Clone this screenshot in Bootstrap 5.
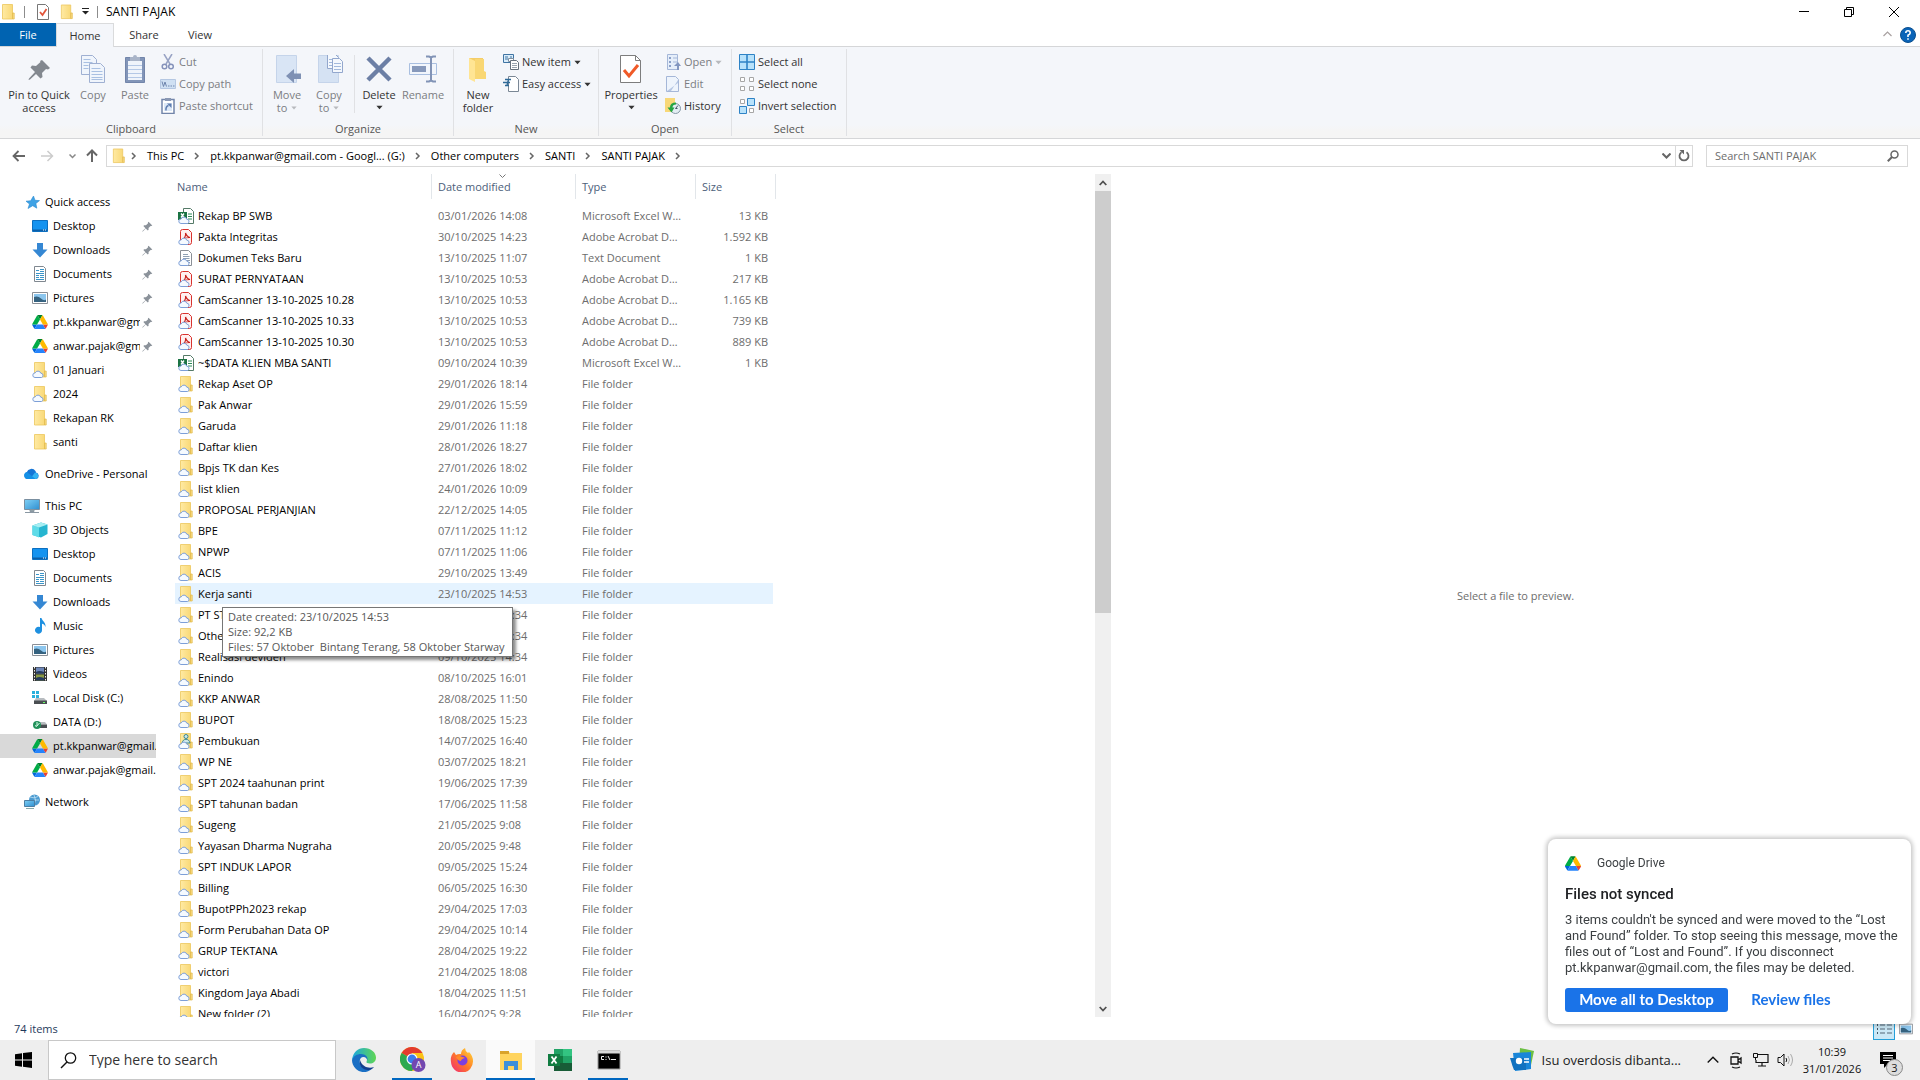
<!DOCTYPE html>
<html lang="en">
<head>
<meta charset="utf-8">
<meta name="viewport" content="width=device-width, initial-scale=1">
<title>SANTI PAJAK</title>
<link href="https://cdn.jsdelivr.net/npm/bootstrap@5.3.0/dist/css/bootstrap.min.css" rel="stylesheet">
<style>
body{font-family:"Open Sans","Noto Sans",sans-serif;font-size:11px;line-height:16px;color:#000;background:#fff;height:100vh;overflow:hidden}
svg{flex:none;display:block}
button{background:none;border:0;padding:0;color:inherit;font:inherit;text-decoration:none}
.titlebar{height:23px;font-size:12px}
.vline{width:1px;height:12px;background:#8c8c8c}
.capbtn{width:45px;height:23px}
.tabs{height:23px;color:#333}
.tabs a{width:60px;height:23px;line-height:23px;text-align:center;color:#333;text-decoration:none}
.tabs a.filetab{width:56px;background:#0063b1;color:#fff}
.tabs a.on{width:58px;border:1px solid #dadbdc;border-bottom:0;position:relative;height:24px;z-index:1;background:#f4f6fa}
.tabs a.viewtab{width:52px}
.ribbon{height:93px;background:linear-gradient(#f4f6fa 78px,#f5f5f5 84px);border-top:1px solid #d5d6d8;border-bottom:1px solid #d5d6d8;color:#333}
.grp{border-right:1px solid #e0e1e4;margin:2px 0;height:87px}
.grp-body{height:72px;padding-top:2px;padding-left:3px}
.g1 .grp-body{padding-left:6px}
.g4 .grp-body{padding-left:2px}
.grp-name{height:15px;line-height:15px;text-align:center;color:#555}
.g1{width:263px}.g2{width:191px}.g3{width:145px}.g4{width:133px}.g5{width:115px}
.big{width:42px;padding-top:4px;line-height:13px;display:flex;flex-direction:column;align-items:center;white-space:nowrap}
.big svg{margin-bottom:5px}
.wide{width:66px}.mid{width:60px}.wider{width:46px}
.off{color:#7b7d82}
.minor{display:flex;align-items:center;gap:3px;height:22px;padding-left:4px;white-space:nowrap}
.insep{width:1px;height:58px;background:#e0e1e4;margin:4px 3px 0 4px}
.addr{height:28px;padding:6px 12px 0 12px}
.box{border:1px solid #d9d9d9;height:22px}
.box a{color:#000;text-decoration:none;white-space:nowrap}
.crumbs{gap:10px;padding-left:5px}
.refresh{border-left:1px solid #d9d9d9;padding:0 2px;height:20px}
.navarrows{width:94px}
.searchbox{width:202px;margin-left:13px}
.searchbox input{border:0;outline:0;font-size:11px;width:160px;padding:0;color:#6d6d6d}
.searchbox input::placeholder{color:#6d6d6d;opacity:1}
.side{width:156px;padding-top:23px;overflow:hidden}
.side a{display:flex;align-items:center;height:24px;color:#000;text-decoration:none;white-space:nowrap;gap:5px;padding-left:32px;overflow:hidden}
.side a.root{padding-left:24px}
.side a.sel{background:#d9d9d9}
.side a span{flex:1 1 0;min-width:0;overflow:hidden}
.side .pinned span{flex:0 0 87px}
.side .pinned svg:last-child{margin-left:-3px}
.side .gapup{margin-top:8px}
.pane{margin-left:19px;padding-top:7px;overflow:hidden;position:relative}
.files{border-collapse:separate;border-spacing:0;table-layout:fixed;width:601px}
.c-name{width:257px}.c-date{width:144px}.c-type{width:120px}.c-size{width:80px}
.files th{height:25px;padding:0 0 0 6px;font-weight:400;color:#4c607a;border-right:1px solid #e2e6ea;position:relative}
.files th:first-child{padding-left:2px}
.files td{height:21px;line-height:21px;padding:0 0 0 6px;color:#6d6d6d;white-space:nowrap;overflow:hidden;text-overflow:ellipsis}
.files td:first-child{color:#000;padding-left:3px}
.files td:last-child{text-align:right;padding-right:5px;border-right:3px solid transparent;background-clip:padding-box}
.files td:nth-child(3){padding-right:12px}
.files tr.hov td{background-color:#e5f3ff}
.files .spacer td{height:6px;line-height:6px}
.sortmark{position:absolute;left:67px;top:0}
.tip{position:absolute;left:47px;top:440px;border:1px solid #767676;background:#fff;color:#575757;line-height:15px;padding:1px 7px 2px 5px;box-shadow:3px 3px 3px rgba(0,0,0,.45);white-space:pre}
.sbar{width:16px;margin-top:7px;background:#f0f0f0}
.sbar button{height:17px;width:16px;display:flex;align-items:center;justify-content:center}
.thumb{background:#cdcdcd;flex:422 0 0}
.track{flex:388 0 0}
.preview{color:#6d6d6d;flex:0 0 809px;padding-top:7px}
@media (max-width:1800px){.preview{flex-basis:42%}}
.status{height:23px;padding:0 7px 0 14px;color:#1e395b}
.viewbtn{width:22px;height:22px;border:1px solid #26a0da;background:#cbe8f6}
.task{height:40px;background:#eee;color:#1a1a1a}
.tasksearch{width:288px;height:40px;background:#fff;border:1px solid #c8c8c8;padding-left:11px;margin-right:3px}
.tasksearch input{border:0;outline:0;background:none;font-size:14px;padding:0;width:220px;color:#333}
.tasksearch input::placeholder{color:#333;opacity:1}
.app{width:49px;height:40px;display:flex;align-items:center;justify-content:center;position:relative}
.app.start{width:48px;padding-right:9px}
.app.start svg{margin-left:8px}
.app.run::after{content:"";position:absolute;left:4px;right:5px;bottom:0;height:2px;background:#0067c0}
.app.act{background:#fafafa}
.app.act::after{left:0;right:0}
.news{font-size:13px;color:#222;margin-right:26px}
.traygap{margin-left:11px}
.clock{width:76px;text-align:center;line-height:17px;color:#111}
.actioncenter{width:40px;position:relative;margin-left:10px}
.count{position:absolute;left:6px;top:7px;width:17px;height:17px;border-radius:50%;background:#ddd;border:1px solid #888;font-size:11px;line-height:15px;text-align:center}
.toastbox{position:fixed;right:9px;bottom:56px;width:363px;background:#fff;border-radius:8px;box-shadow:0 0 4px 2px rgba(0,0,0,.22);padding:16px 8px 12px 17px;font-family:Roboto,sans-serif;color:#3c4043;font-size:12px;z-index:5}
.toastbox h2{font:500 15px/20px Roboto,sans-serif;color:#202124;margin:13px 0 8px}
.toastbox p{font-size:13px;line-height:16px;margin:0 0 12px}
.gbtn{font:700 15px/22px Lato,sans-serif;height:24px;padding-bottom:2px;color:#fff;background:#1a73e8;border-radius:3px;width:163px}
.gbtn.text{background:none;color:#1a73e8;width:126px}
</style>
<script src="https://cdn.jsdelivr.net/npm/bootstrap@5.3.0/dist/js/bootstrap.bundle.min.js"></script>
</head>
<body class="d-flex flex-column">

<svg width="0" height="0" class="position-absolute" aria-hidden="true">
<defs>
<linearGradient id="gy" x1="0" x2="1"><stop offset="0" stop-color="#ffeaa3"/><stop offset="1" stop-color="#f9d978"/></linearGradient>
<linearGradient id="gb" x1="0" y1="0" x2="1" y2="1"><stop offset="0" stop-color="#7fd0f5"/><stop offset="1" stop-color="#2f8fd0"/></linearGradient>
<linearGradient id="ge" x1="0" y1="0" x2="1" y2="0"><stop offset="0" stop-color="#1ba7e0"/><stop offset="1" stop-color="#5fd653"/></linearGradient>
<linearGradient id="gf" x1="1" y1="0" x2="0" y2="1"><stop offset="0" stop-color="#ffe03a"/><stop offset=".5" stop-color="#ff7a26"/><stop offset="1" stop-color="#f0237b"/></linearGradient>
<symbol id="folder" viewBox="0 0 16 16"><path d="M2.500.5h10V15h-10z" fill="url(#gy)" stroke="#ecc65c" stroke-width=".8"/><path d="M12.500 9h1.700v6h-1.700z" fill="#fbdc82" stroke="#e0b748" stroke-width=".7"/></symbol>
<symbol id="cloud" viewBox="0 0 16 16"><path d="M3 15.500a2.300 2.300 0 0 1 .2-4.600 3 3 0 0 1 5.600.3 2.200 2.200 0 0 1 .7 4.300z" fill="#f5faff" stroke="#7d9fd8" stroke-width="1"/></symbol>
<symbol id="cfolder" viewBox="0 0 16 16"><use href="#folder"/><use href="#cloud"/></symbol>
<symbol id="pfolder" viewBox="0 0 16 16"><use href="#folder"/><circle cx="8" cy="3.500" r="2" fill="#cfe8ea" stroke="#3a8793"/><path d="M4 10c1-5 7-5 8 0z" fill="#cfe8ea" stroke="#3a8793"/><use href="#cloud"/></symbol>
<symbol id="pdf" viewBox="0 0 16 16"><path d="M2.500 2.500q0-2 2-2h6l3 3v10q0 2-2 2h-7q-2 0-2-2z" fill="#fff0f0" stroke="#d9322e"/><path d="M5 10c2-1 3-4 2.500-6 1 3 2 4 4.500 4.500-3 0-5 .5-7 1.500" fill="none" stroke="#c8201c" stroke-width="1.200"/><use href="#cloud"/></symbol>
<symbol id="txt" viewBox="0 0 16 16"><path d="M2.500.5h8l3 3v12h-11z" fill="#fff" stroke="#8a8f96"/><path d="M5 4.500h5M5 6.500h6.500M5 8.500h6.500M9 10.500h3M10 12.500h2" stroke="#8fa0b3"/><use href="#cloud"/></symbol>
<symbol id="xls" viewBox="0 0 16 16"><path d="M5.500.5h7l3 3v12h-10z" fill="#fff" stroke="#557a68"/><path d="M10 6h4M10 8.500h4M10 11h4" stroke="#2b8a57"/><path d="M0 4h9v8H0z" fill="#1b7343"/><path d="M3 5.500l3 4M6 5.500l-3 4" stroke="#fff" stroke-width="1.300"/><use href="#cloud"/></symbol>
<symbol id="drive" viewBox="0 0 87.300 78"><path d="m6.600 66.850 3.850 6.650c.8 1.400 1.950 2.500 3.300 3.300l13.750-23.800h-27.500c0 1.550.4 3.100 1.200 4.500z" fill="#0066da"/><path d="m43.650 25-13.750-23.800c-1.350.8-2.500 1.900-3.300 3.300l-25.400 44a9 9 0 0 0-1.200 4.500h27.500z" fill="#00ac47"/><path d="m73.550 76.800c1.350-.8 2.500-1.900 3.300-3.300l1.600-2.750 7.650-13.250c.8-1.400 1.200-2.950 1.200-4.500h-27.500l5.850 11.500z" fill="#ea4335"/><path d="m43.650 25 13.750-23.800c-1.350-.8-2.900-1.200-4.500-1.200h-18.500c-1.600 0-3.150.45-4.500 1.200z" fill="#00832d"/><path d="m59.800 53h-32.300l-13.750 23.800c1.350.8 2.900 1.200 4.500 1.200h50.800c1.600 0 3.150-.45 4.500-1.200z" fill="#2684fc"/><path d="m73.400 26.500-12.700-22c-.8-1.400-1.950-2.500-3.300-3.300l-13.750 23.800 16.150 28h27.450c0-1.550-.4-3.100-1.200-4.500z" fill="#ffba00"/></symbol>
<symbol id="desk" viewBox="0 0 16 16"><path d="M.5 2.500h15v11H.5z" fill="#1493f0" stroke="#0c6fc0"/><path d="M1 11.500h14v1.500H1z" fill="#0b5ea8"/><path d="M11 12h3" stroke="#fff" stroke-dasharray="1 1"/></symbol>
<symbol id="down" viewBox="0 0 16 16"><path d="M5 1h6v6.500h4.500L8 15.500.5 7.500H5z" fill="#3587d3"/></symbol>
<symbol id="doc" viewBox="0 0 16 16"><path d="M2.500.5h9l2 2v13h-11z" fill="#fff" stroke="#808890"/><path d="M4 4.500h3M8 3.500h4M8 5.500h4M4 7.500h8M4 9.500h3M8 9.500h4M4 11.500h3M8 11.500h4M4 13.500h8" stroke="#3a95c9"/></symbol>
<symbol id="pic" viewBox="0 0 16 16"><path d="M.5 2.500h15v11H.5z" fill="#fff" stroke="#8a8f96"/><path d="M2 4h12v8H2z" fill="#8cc6ee"/><path d="M2 7q4-1.500 7 1.500t5 1V12H2z" fill="#35627f"/></symbol>
<symbol id="star" viewBox="0 0 16 16"><path d="M9.500 2l1.500 4.300 4.500.3-3.600 2.900.9 4.700-4.100-2.500L4 14.500l1.500-4.500L2 7.200l4.700-.5z" fill="#3ea2e5" stroke="#2a8ad0" stroke-width=".6"/></symbol>
<symbol id="onedrive" viewBox="0 0 16 16"><path d="M3.500 13a3.500 3.500 0 0 1-.8-6.800A5 5 0 0 1 11.500 5q.4.700.5 1.500A3.400 3.400 0 0 1 12.500 13z" fill="#1675d6"/><path d="M6 13l5-6.400a3.400 3.400 0 0 1 1.500 6.400z" fill="#35b3f3"/><path d="M3 6l8.500 6.900H3.500A3.500 3.500 0 0 1 3 6z" fill="#1490e6"/></symbol>
<symbol id="pc" viewBox="0 0 16 16"><path d="M.5 1.500h15v10H.5z" fill="url(#gb)" stroke="#7a8fa0"/><path d="M6 12h4v1.500H6zM1 14.500h14" stroke="#8a98a3" fill="#9aa"/></symbol>
<symbol id="cube" viewBox="0 0 16 16"><path d="M.5 3.500L9 .5l6.500 2v9.500L9 15.500.5 13z" fill="#25b5d0"/><path d="M.5 3.500L7 5.500v9.900l-6.500-2.500z" fill="#5edbe8"/><path d="M.5 3.500L9 .5l6.500 2L7 5.500z" fill="#a6eef2"/></symbol>
<symbol id="music" viewBox="0 0 16 16"><path d="M8 0h1.500c.5 3 4.500 4 4 9-.6-2-2-3-3.500-3.200V12a3.500 3.500 0 1 1-2-3z" fill="#1e90e0"/></symbol>
<symbol id="video" viewBox="0 0 16 16"><path d="M1 1h14v14H1z" fill="#333"/><path d="M4 1.500h8v6H4z" fill="#6d86b8"/><path d="M4 8.500h8v6H4z" fill="#8a9a45"/><path d="M4 6q3-2 8 0v1.500H4zM4 12q3-2 8 0v2.500H4z" fill="#263b5e"/><path d="M2.500 1v14M13.500 1v14" stroke="#eee" stroke-dasharray="1.500 1.500"/></symbol>
<symbol id="disk" viewBox="0 0 16 16"><path d="M0 1h3v3H0zM4 1h3v3H4zM0 5h3v3H0zM4 5h3v3H4z" fill="#2bb0dc"/><path d="M4 8h8l3 3H2z" fill="#b8bcc0"/><path d="M2 10.500h13V14H2z" fill="#4a4e52"/><path d="M11 12.500h2" stroke="#6f6"/></symbol>
<symbol id="ddisk" viewBox="0 0 16 16"><path d="M7 8h6l2 2.500H5z" fill="#b8bcc0"/><path d="M5 10.500h10V14H5z" fill="#4a4e52"/><circle cx="5" cy="11" r="4" fill="#22915a"/><path d="M3 11.500l1.500 1L7.500 9M5 8v4" stroke="#d8ffe8" fill="none"/></symbol>
<symbol id="net" viewBox="0 0 16 16"><circle cx="10.500" cy="6" r="5.500" fill="#4a9ad0"/><path d="M6 3q4 2 8-.5M6 8q5-3 9-2M10 1q3 5 0 10" stroke="#bfe1f5" fill="none" stroke-width=".8"/><path d="M.5 6.500h10v6H.5z" fill="url(#gb)" stroke="#4d7fa3"/><path d="M2 14.500h8" stroke="#8aa"/></symbol>
<symbol id="pin" viewBox="0 0 16 16"><path d="M9.500 1l5.500 5.500-1.500.8-1-.2-3 3 .1 2.500-1.200 1.200-3-3-4.200 4.300-.8.300.3-.8L5 10.400l-3-3 1.200-1.200 2.600.1 3-3-.2-1z" fill="#8b929a"/></symbol>
<symbol id="dn" viewBox="0 0 8 5"><path d="M.5.500h7L4 4.500z" fill="currentColor"/></symbol>
<symbol id="chev" viewBox="0 0 6 8"><path d="M1 1l3 3-3 3" fill="none" stroke="#666" stroke-width="1.500"/></symbol>
</defs>
</svg>

<header>
<div class="titlebar d-flex align-items-center">
  <svg width="16" height="16" class="me-2"><use href="#folder"/></svg>
  <span class="vline me-2"></span>
  <button class="mx-1 pe-1" aria-label="Properties"><svg width="14" height="16" viewBox="0 0 14 16"><path d="M.5.5h8l3 3v12H.5z" fill="#fff" stroke="#777"/><path d="M3 8l2.500 3L9.500 5" fill="none" stroke="#e2553a" stroke-width="1.800"/></svg></button>
  <button class="me-2" aria-label="New folder"><svg width="15" height="16"><use href="#folder"/></svg></button>
  <button class="me-2" aria-label="Customize"><svg width="7" height="7" viewBox="0 0 7 7"><path d="M0 .5h7" stroke="#222"/><path d="M0 3h7L3.500 6.500z" fill="#222"/></svg></button>
  <span class="vline me-2"></span>
  <span class="me-auto">SANTI PAJAK</span>
  <button class="capbtn" aria-label="Minimize"><svg class="mx-auto" width="10" height="10" viewBox="0 0 10 10"><path d="M0 4.500h10" stroke="#000"/></svg></button>
  <button class="capbtn" aria-label="Restore"><svg class="mx-auto" width="10" height="10" viewBox="0 0 10 10"><path d="M.5 2.500h7v7h-7zM2.500 2.500v-2h7v7h-2" fill="none" stroke="#000"/></svg></button>
  <button class="capbtn me-1" aria-label="Close"><svg class="mx-auto" width="10" height="10" viewBox="0 0 10 10"><path d="M0 0l10 10M10 0L0 10" stroke="#000"/></svg></button>
</div>
<nav class="tabs d-flex align-items-start">
  <a class="filetab" href="#">File</a><a class="on" href="#">Home</a><a href="#">Share</a><a href="#" class="viewtab me-auto">View</a>
  <button class="mt-2 me-1" aria-label="Collapse"><svg width="9" height="6" viewBox="0 0 9 6"><path d="M.5 5l4-4 4 4" fill="none" stroke="#a8a0a0" stroke-width="1.200"/></svg></button>
  <button class="ms-1 me-1 mt-1" aria-label="Help"><svg width="16" height="16" viewBox="0 0 16 16"><circle cx="8" cy="8" r="7.500" fill="#0a64b8" stroke="#0b4f8f"/><path d="M5.800 6q0-2.200 2.200-2.200T10.200 6Q10.200 7 8 8.200V10" fill="none" stroke="#fff" stroke-width="1.600"/><path d="M7.200 11.200h1.600v1.600H7.200z" fill="#fff"/></svg></button>
</nav>
<div class="ribbon d-flex">
  <section class="grp g1">
    <div class="grp-body d-flex">
      <button class="big wide"><svg width="28" height="28" viewBox="0 0 28 28"><path d="M17 5l8 8-2 1.500-2-.5-4 4 .5 4-2 1.500-4.500-4.500-6 5.500-1.500.5.5-1.500L10 17l-4.500-4.500L7 10.500l4 .5 4.500-4-.5-1z" fill="#83888f"/></svg>Pin to Quick<span>access</span></button>
      <button class="big off"><svg width="28" height="28" viewBox="0 0 28 28"><g fill="#f0f5fc" stroke="#9fb0d2"><path d="M2.500.5h11l4 4v15h-15z"/><path d="M10.500 8.500h11l4 4v15h-15z"/></g><path d="M4.500 4.500h7M4.500 7.500h9M4.500 10.500h5M4.500 13.500h5M12.500 13.500h9M12.500 16.500h11M12.500 19.500h11M12.500 22.500h11M12.500 24.500h11" stroke="#a9c0e2"/></svg>Copy</button>
      <button class="big off"><svg width="28" height="28" viewBox="0 0 28 28"><path d="M4.500 2.500h19v25h-19z" fill="#8295b8" stroke="#7285aa"/><path d="M7 6h14v19H7z" fill="#eff4fb"/><path d="M9 2h3q0-2 2-2t2 2h3v4H9z" fill="#a9b4c8"/><path d="M7 10.500h14M7 14.500h14M7 18.500h14M7 22.500h14" stroke="#b4c8e6"/></svg>Paste</button>
      <div class="off">
        <button class="minor"><svg width="16" height="16" viewBox="0 0 16 16"><path d="M4 0l6 10M12 0L6 10" stroke="#98a3c4" stroke-width="1.500"/><circle cx="4.500" cy="12.500" r="2.300" fill="none" stroke="#8592ba" stroke-width="1.500"/><circle cx="11" cy="12.500" r="2.300" fill="none" stroke="#8592ba" stroke-width="1.500"/></svg>Cut</button>
        <button class="minor"><svg width="16" height="16" viewBox="0 0 16 16"><path d="M.5 3.500h15v9H.5z" fill="#cfe0f3" stroke="#b4c7e2"/><path d="M2 5.500l1.500 5L5 6l1.500 4.500M8 10h1.500M10.500 10H12M13 10h1.500" fill="none" stroke="#6f86ae"/></svg>Copy path</button>
        <button class="minor"><svg width="16" height="16" viewBox="0 0 16 16"><path d="M2 1.500h12v14H2z" fill="#fff" stroke="#7285aa" stroke-width="1.500"/><path d="M5 0h6v3H5z" fill="#8a98b4"/><path d="M4 5h8v8H4z" fill="#dce8f7"/><path d="M6 12.500q-.5-4 2.500-5" fill="none" stroke="#5f7db0" stroke-width="1.500"/><path d="M7 5.500h4.500V10z" fill="#5f7db0"/></svg>Paste shortcut</button>
      </div>
    </div>
    <div class="grp-name">Clipboard</div>
  </section>
  <section class="grp g2">
    <div class="grp-body d-flex">
      <button class="big off"><svg width="28" height="28" viewBox="0 0 28 28"><path d="M3.500.5h20v27h-20z" fill="#d9e5f5" stroke="#c5d4ea"/><path d="M13 21l8-7v4.500h8v5.500h-8v4z" fill="#7f91b4"/></svg>Move<span class="d-flex align-items-center gap-1">to <svg class="m-0 opacity-50" width="6" height="4"><use href="#dn"/></svg></span></button>
      <button class="big off"><svg width="28" height="28" viewBox="0 0 28 28"><path d="M3.500.5h20v27h-20z" fill="#d5e2f3" stroke="#c5d4ea"/><g fill="#f4f8fd" stroke="#93a7cd"><path d="M12.500-.5h8l3 3v11h-11z"/><path d="M17.500 3.500h7l3 3v11h-10z"/></g><path d="M19 8.500h7M19 11.500h7M19 14.500h7M14 4.500h3M14 7.500h3M14 10.500h3" stroke="#a3b9dc"/></svg>Copy<span class="d-flex align-items-center gap-1">to <svg class="m-0 opacity-50" width="6" height="4"><use href="#dn"/></svg></span></button>
      <span class="insep"></span>
      <button class="big"><svg width="28" height="28" viewBox="0 0 28 28"><path d="M3 3l22 22M25 3L3 25" stroke="#6c7fa5" stroke-width="4.500"/></svg>Delete<svg class="mt-1" width="7" height="5"><use href="#dn"/></svg></button>
      <button class="big wider off"><svg width="28" height="28" viewBox="0 0 28 28"><path d="M.5 8.500h27v11H.5z" fill="#f2f6fc" stroke="#a9bfe0"/><path d="M3 11h14v6H3z" fill="#8799bb"/><path d="M17 1.500h3l2 1 2-1h3M17 26.500h3l2-1 2 1h3M22 2v24" fill="none" stroke="#8193b6" stroke-width="2"/></svg>Rename</button>
    </div>
    <div class="grp-name">Organize</div>
  </section>
  <section class="grp g3">
    <div class="grp-body d-flex">
      <button class="big"><svg width="28" height="28" viewBox="0 0 28 28"><path d="M5 3h14v21H5z" fill="#f4cd68"/><path d="M5 3l6 3v21l-6-3z" fill="#ffe594"/><path d="M11 4h9v12l2 1v7h-11z" fill="#f9d774"/></svg>New<span>folder</span></button>
      <div>
        <button class="minor"><svg width="16" height="16" viewBox="0 0 16 16"><path d="M.5.500h10v8H.5z" fill="#d9ecfa" stroke="#3f74a3"/><path d="M2 3h3M7 3h2M2 5h3" stroke="#3f74a3"/><path d="M5.500 4.500h5v3h-5z" fill="#fff" stroke="#8090a0"/><path d="M7.500 6.500h6l2 2v7h-8z" fill="#fff" stroke="#66717d"/><path d="M9 9.500h5M9 11.500h5M9 13.500h5" stroke="#9aa5b0"/></svg>New item <svg width="7" height="5"><use href="#dn"/></svg></button>
        <button class="minor"><svg width="16" height="16" viewBox="0 0 16 16"><path d="M5.500.5h7l3 3v12h-10z" fill="#fff" stroke="#7a8795"/><path d="M2 3.500h6M0 6.500h7M2 9.500h4M6 3q-2 3-2 7" stroke="#2f6a97" fill="none" stroke-width="1.300"/></svg>Easy access <svg width="7" height="5"><use href="#dn"/></svg></button>
      </div>
    </div>
    <div class="grp-name">New</div>
  </section>
  <section class="grp g4">
    <div class="grp-body d-flex">
      <button class="big mid"><svg width="28" height="28" viewBox="0 0 28 28"><path d="M3.500.5h15l5 5v22h-20z" fill="#fff" stroke="#7d7d7d"/><path d="M18.500.5v5h5" fill="none" stroke="#7d7d7d"/><path d="M7 15l5 6 9-11" fill="none" stroke="#f05a28" stroke-width="3"/></svg>Properties<svg class="mt-1" width="7" height="5"><use href="#dn"/></svg></button>
      <div>
        <button class="minor off"><svg width="16" height="16" viewBox="0 0 16 16"><path d="M2.500.5h10v15h-10z" fill="#e5eefa" stroke="#a5b7d8"/><path d="M4 3h2v2H4zM4 7h2v2H4zM4 11h2v2H4z" fill="#8ba0c8"/><path d="M8 4h4M8 8h4" stroke="#a5b7d8"/><path d="M12 16v-4h-3l4-4 3 4h-2v4z" fill="#8296c0"/></svg>Open <svg class="opacity-50" width="7" height="5"><use href="#dn"/></svg></button>
        <button class="minor off"><svg width="16" height="16" viewBox="0 0 16 16"><path d="M1.500.5h9l3 3v12h-12z" fill="#eef4fc" stroke="#a5b7d8"/><path d="M13 4L6 15H2l11-8z" fill="#b5c6e3"/></svg>Edit</button>
        <button class="minor"><svg width="16" height="16" viewBox="0 0 16 16"><path d="M0 0h10v14H0z" fill="#f8d878"/><circle cx="10.500" cy="10.500" r="5" fill="#e3edf3" stroke="#8497a5"/><path d="M10.500 10.500l2.500-3M10.500 10.500h2" stroke="#456"/><path d="M11 4.500q-6 0-6 5H2.500l4 5 3-5H7.500q0-3 3.500-3z" fill="#26a544"/></svg>History</button>
      </div>
    </div>
    <div class="grp-name">Open</div>
  </section>
  <section class="grp g5">
    <div class="grp-body">
      <button class="minor"><svg width="16" height="16" viewBox="0 0 16 16"><path d="M.5.500h15v15H.5z" fill="#b8e2fb" stroke="#2e83c6"/><path d="M8 0v16M0 8h16" stroke="#2e83c6" stroke-width="1.600"/></svg>Select all</button>
      <button class="minor"><svg width="16" height="16" viewBox="0 0 16 16"><path d="M1.500 1.500h4v4h-4zM10.500 1.500h4v4h-4zM1.500 10.500h4v4h-4zM10.500 10.500h4v4h-4z" fill="#fff" stroke="#a6a6a6"/></svg>Select none</button>
      <button class="minor"><svg width="16" height="16" viewBox="0 0 16 16"><path d="M1.500 1.500h4v4h-4zM10.500 10.500h4v4h-4z" fill="#fff" stroke="#a6a6a6"/><path d="M8.500.500h7v7h-7zM.5 8.500h7v7h-7z" fill="#b8e2fb" stroke="#2e83c6"/></svg>Invert selection</button>
    </div>
    <div class="grp-name">Select</div>
  </section>
</div>
<div class="addr d-flex">
  <div class="navarrows d-flex align-items-center justify-content-between pe-2">
    <button aria-label="Back"><svg width="14" height="12" viewBox="0 0 14 12"><path d="M13 6H2M6.500 1L1.500 6l5 5" fill="none" stroke="#666" stroke-width="1.800"/></svg></button>
    <button class="ps-1" aria-label="Forward"><svg width="14" height="12" viewBox="0 0 14 12"><path d="M1 6h11M7.500 1l5 5-5 5" fill="none" stroke="#ccc" stroke-width="1.500"/></svg></button>
    <button class="ps-1" aria-label="Recent"><svg width="7" height="5" viewBox="0 0 7 5"><path d="M.5.500l3 3 3-3" fill="none" stroke="#888" stroke-width="1.500"/></svg></button>
    <button aria-label="Up"><svg width="12" height="14" viewBox="0 0 12 14"><path d="M6 13V2M1 6.500L6 1.500l5 5" fill="none" stroke="#666" stroke-width="2"/></svg></button>
  </div>
  <div class="box d-flex align-items-center flex-grow-1 ps-1">
    <svg width="15" height="16"><use href="#folder"/></svg>
    <div class="crumbs d-flex align-items-center">
    <svg width="6" height="8"><use href="#chev"/></svg>
    <a href="#">This PC</a><svg width="6" height="8"><use href="#chev"/></svg>
    <a href="#">pt.kkpanwar@gmail.com - Googl... (G:)</a><svg width="6" height="8"><use href="#chev"/></svg>
    <a href="#">Other computers</a><svg width="6" height="8"><use href="#chev"/></svg>
    <a href="#">SANTI</a><svg width="6" height="8"><use href="#chev"/></svg>
    <a href="#">SANTI PAJAK</a><svg width="6" height="8"><use href="#chev"/></svg>
    </div>
    <button class="ms-auto me-1" aria-label="Previous locations"><svg width="9" height="6" viewBox="0 0 9 6"><path d="M.5.500l4 4 4-4" fill="none" stroke="#666" stroke-width="2"/></svg></button>
    <button class="refresh" aria-label="Refresh"><svg width="12" height="12" viewBox="0 0 12 12"><path d="M8.500 2.200a4.500 4.500 0 1 1-5 0" fill="none" stroke="#666" stroke-width="1.800"/><path d="M1.500 0h4.500v4.500z" fill="#666"/></svg></button>
  </div>
  <div class="box searchbox d-flex align-items-center justify-content-between px-2">
    <input type="search" aria-label="Search" placeholder="Search SANTI PAJAK">
    <svg width="12" height="12" viewBox="0 0 12 12"><circle cx="7.500" cy="4.500" r="3.500" fill="none" stroke="#666" stroke-width="1.500"/><path d="M5 7L.8 11.200" stroke="#666" stroke-width="2"/></svg>
  </div>
</div>
</header>

<main class="d-flex flex-grow-1 overflow-hidden">
<nav class="side flex-shrink-0">
  <a class="root" href="#"><svg width="16" height="16"><use href="#star"/></svg><span>Quick access</span></a>
  <a class="pinned" href="#"><svg width="16" height="16"><use href="#desk"/></svg><span>Desktop</span><svg width="11" height="11"><use href="#pin"/></svg></a>
  <a class="pinned" href="#"><svg width="16" height="16"><use href="#down"/></svg><span>Downloads</span><svg width="11" height="11"><use href="#pin"/></svg></a>
  <a class="pinned" href="#"><svg width="16" height="16"><use href="#doc"/></svg><span>Documents</span><svg width="11" height="11"><use href="#pin"/></svg></a>
  <a class="pinned" href="#"><svg width="16" height="16"><use href="#pic"/></svg><span>Pictures</span><svg width="11" height="11"><use href="#pin"/></svg></a>
  <a class="pinned" href="#"><svg width="16" height="14"><use href="#drive"/></svg><span>pt.kkpanwar@gmail.com</span><svg width="11" height="11"><use href="#pin"/></svg></a>
  <a class="pinned" href="#"><svg width="16" height="14"><use href="#drive"/></svg><span>anwar.pajak@gmail.com</span><svg width="11" height="11"><use href="#pin"/></svg></a>
  <a href="#"><svg width="16" height="16"><use href="#cfolder"/></svg><span>01 Januari</span></a>
  <a href="#"><svg width="16" height="16"><use href="#cfolder"/></svg><span>2024</span></a>
  <a href="#"><svg width="16" height="16"><use href="#folder"/></svg><span>Rekapan RK</span></a>
  <a href="#"><svg width="16" height="16"><use href="#folder"/></svg><span>santi</span></a>
  <a class="root gapup" href="#"><svg width="16" height="16"><use href="#onedrive"/></svg><span>OneDrive - Personal</span></a>
  <a class="root gapup" href="#"><svg width="16" height="16"><use href="#pc"/></svg><span>This PC</span></a>
  <a href="#"><svg width="16" height="16"><use href="#cube"/></svg><span>3D Objects</span></a>
  <a href="#"><svg width="16" height="16"><use href="#desk"/></svg><span>Desktop</span></a>
  <a href="#"><svg width="16" height="16"><use href="#doc"/></svg><span>Documents</span></a>
  <a href="#"><svg width="16" height="16"><use href="#down"/></svg><span>Downloads</span></a>
  <a href="#"><svg width="16" height="16"><use href="#music"/></svg><span>Music</span></a>
  <a href="#"><svg width="16" height="16"><use href="#pic"/></svg><span>Pictures</span></a>
  <a href="#"><svg width="16" height="16"><use href="#video"/></svg><span>Videos</span></a>
  <a href="#"><svg width="16" height="16"><use href="#disk"/></svg><span>Local Disk (C:)</span></a>
  <a href="#"><svg width="16" height="16"><use href="#ddisk"/></svg><span>DATA (D:)</span></a>
  <a class="sel" href="#"><svg width="16" height="14"><use href="#drive"/></svg><span>pt.kkpanwar@gmail.com</span></a>
  <a href="#"><svg width="16" height="14"><use href="#drive"/></svg><span>anwar.pajak@gmail.com</span></a>
  <a class="root gapup" href="#"><svg width="16" height="16"><use href="#net"/></svg><span>Network</span></a>
</nav>
<section class="pane flex-grow-1">
  <table class="files">
    <colgroup><col class="c-name"><col class="c-date"><col class="c-type"><col class="c-size"></colgroup>
    <thead><tr><th scope="col">Name</th><th scope="col"><svg class="sortmark" width="7" height="5" viewBox="0 0 7 5"><path d="M.5.500l3 3 3-3" fill="none" stroke="#777"/></svg>Date modified</th><th scope="col">Type</th><th scope="col">Size</th></tr></thead>
    <tbody id="rows"><tr class="spacer" aria-hidden="true"><td></td><td></td><td></td><td></td></tr></tbody>
  </table>
  <div class="tip" role="tooltip">Date created: 23/10/2025 14:53
Size: 92,2 KB
Files: 57 Oktober  Bintang Terang, 58 Oktober Starway</div>
</section>
<div class="sbar d-flex flex-column flex-shrink-0">
  <button aria-label="Scroll up"><svg width="8" height="6" viewBox="0 0 8 6"><path d="M.7 5L4 1.500 7.300 5" fill="none" stroke="#505050" stroke-width="1.800"/></svg></button>
  <div class="thumb"></div><div class="track"></div>
  <button aria-label="Scroll down"><svg width="8" height="6" viewBox="0 0 8 6"><path d="M.7 1L4 4.500 7.300 1" fill="none" stroke="#505050" stroke-width="1.800"/></svg></button>
</div>
<aside class="preview d-flex align-items-center justify-content-center">Select a file to preview.</aside>
</main>

<div class="status d-flex align-items-center justify-content-between">
  <span>74 items</span>
  <span class="d-flex align-items-center gap-1">
    <button class="viewbtn" aria-label="Details view"><svg width="20" height="20" viewBox="0 0 20 20"><path d="M3.500 5v12" stroke="#456" stroke-dasharray="2 2"/><path d="M6 6h5M6 10h5M6 14h5M13 6h5M13 10h5M13 14h5" stroke="#567" stroke-width="1.200"/></svg></button>
    <button aria-label="Thumbnail view"><svg width="14" height="14"><use href="#pic"/></svg></button>
  </span>
</div>

<footer class="task d-flex align-items-center">
  <button class="app start" aria-label="Start"><svg width="17" height="16" viewBox="0 0 17 16"><path d="M0 2.200l7-1V7.500H0zM8 1l9-1v7.500H8zM0 8.500h7v6.300l-7-1zM8 8.500h9V16l-9-1.200z" fill="#000"/></svg></button>
  <label class="tasksearch d-flex align-items-center gap-2"><svg width="17" height="17" viewBox="0 0 17 17"><circle cx="10.500" cy="6" r="5.200" fill="none" stroke="#111" stroke-width="1.300"/><path d="M7 10L1 16" stroke="#111" stroke-width="1.400"/></svg><input type="text" class="ms-1" aria-label="Search Windows" placeholder="Type here to search"></label>
  <button class="app" aria-label="Edge"><svg width="24" height="24" viewBox="0 0 24 24"><path d="M0 12C1 4 6 0 12 0c7 0 12 4.500 12 9.500 0 4-3 6-6 6-2.500 0-4-.8-3.500-1.700C15.500 12 15 8.500 11 8.500 6 8 2 9.500 0 12z" fill="url(#ge)"/><path d="M0 12C1.500 8 5 6 9 6c5 0 7 3.500 6.500 6-1-2-2-3-4-3-3 0-4.500 3-3.500 6.500C9 20 14 22 20 20.500 16 25.500 8 25 4 21 1 18 0 15 0 12z" fill="#1a6fc4"/><path d="M8 12c-1.500 6 3 10.500 9 10 2-.3 4-1.500 5-3-5 2-12 0-14-7z" fill="#123f8f"/></svg></button>
  <button class="app run" aria-label="Chrome"><svg width="26" height="26" viewBox="0 0 26 26"><circle cx="12" cy="12" r="12" fill="#fbc116"/><path d="M12 12L1.600 6A12 12 0 0 1 22.400 6H12z" fill="#e33b2e"/><path d="M1.600 6A12 12 0 0 0 12 24l5-9-5-3z" fill="#2da94f"/><circle cx="12" cy="12" r="5.500" fill="#fff"/><circle cx="12" cy="12" r="4.400" fill="#3b7ded"/><circle cx="18.500" cy="18" r="7" fill="#7248b0"/><text x="18.500" y="21" text-anchor="middle" font-size="9" fill="#fff">A</text></svg></button>
  <button class="app" aria-label="Firefox"><svg width="24" height="24" viewBox="0 0 24 24"><path d="M4 4l2 3q2-1.500 5-1 0-4 4-6 0 3 3 5l1-1q4 4 4 9a11 11 0 0 1-22 1Q0 8 4 4z" fill="url(#gf)"/><circle cx="12.500" cy="12.500" r="5" fill="#7b3fe0"/><path d="M6 9q4-2 6 0 2 0 3 1-4 1-4 3-3 0-5-4z" fill="#ff8a2a"/></svg></button>
  <button class="app act run" aria-label="File Explorer"><svg width="24" height="24" viewBox="0 0 24 24"><path d="M1 3h8l2 2h12v17H1z" fill="#ffd45e"/><path d="M1 3h9v3H1z" fill="#d9a32b"/><path d="M5 13h14v9h-4v-4H9v4H5z" fill="#3d8fd8"/></svg></button>
  <button class="app" aria-label="Excel"><svg width="24" height="24" viewBox="0 0 24 24"><path d="M6 1h18v22H6z" fill="#21a366"/><path d="M15 1h9v7h-9z" fill="#33c481"/><path d="M6 8h9v7H6z" fill="#107c41"/><path d="M6 15h18v8H6z" fill="#185c37"/><path d="M0 6h12v12H0z" fill="#107c41"/><path d="M3.500 8.500l5 7M8.500 8.500l-5 7" stroke="#fff" stroke-width="1.800"/></svg></button>
  <button class="app run" aria-label="Command Prompt"><svg width="24" height="24" viewBox="0 0 24 24"><path d="M1 3h22v18H1z" fill="#000" stroke="#999"/><path d="M1 3h22v2.500H1z" fill="#d8d8d8"/><path d="M7 8.500H4.500v3H7M9 8.500v1M9 11v1M11 8l2 4M14 11.500h5" stroke="#eee" fill="none"/></svg></button>
  <button class="news d-flex align-items-center gap-2 ms-auto"><svg width="24" height="24" viewBox="0 0 24 24"><path d="M10 0l14 3-3 14H9z" fill="#6cbf43"/><path d="M3 5l18-1v17L5 23z" fill="#1a86d8"/><path d="M0 10h16v12H4q-2-5-4-12z" fill="#1272c0"/><circle cx="9" cy="13" r="3.200" fill="#fff"/><path d="M14 11h5M14 14h5" stroke="#fff" stroke-width="1.500"/></svg>Isu overdosis dibanta...</button>
  <button aria-label="Hidden icons"><svg width="12" height="8" viewBox="0 0 12 8"><path d="M.7 6.500L6 1.200l5.300 5.300" fill="none" stroke="#111" stroke-width="1.400"/></svg></button>
  <button class="traygap" aria-label="Meet now"><svg width="12" height="17" viewBox="0 0 12 17"><path d="M2 2q4-2 8 0M2 15q4 2 8 0" fill="none" stroke="#111" stroke-width="1.200"/><path d="M1 5h7v7H1zM8 8l3-2v5L8 9" fill="none" stroke="#111" stroke-width="1.300"/></svg></button>
  <button class="traygap" aria-label="Network"><svg width="16" height="14" viewBox="0 0 16 14"><path d="M5 1.500h10v8H3V7M9 9.500v4M5 13h8" fill="none" stroke="#111" stroke-width="1.200"/><path d="M.5.500h4v4h-4zM2.500 4.500V7" fill="none" stroke="#111"/></svg></button>
  <button class="ms-2" aria-label="Volume"><svg width="17" height="14" viewBox="0 0 17 14"><path d="M1 4.500h2.500L7 1v12L3.500 9.500H1z" fill="none" stroke="#111"/><path d="M9 5q1.500 2 0 4" fill="none" stroke="#111"/><path d="M11 3q3 4 0 8M13.500 1q4 6 0 12" fill="none" stroke="#aaa"/></svg></button>
  <div class="clock">10:39<br>31/01/2026</div>
  <button class="actioncenter" aria-label="Notifications"><svg width="16" height="16" viewBox="0 0 16 16"><path d="M0 0h16v12H8l-4 4v-4H0z" fill="#000"/><path d="M3 3.500h10M3 6h10M3 8.500h7" stroke="#fff"/></svg><span class="count">3</span></button>
</footer>

<div class="toastbox" role="alert">
  <div class="d-flex align-items-center"><svg width="16" height="15" class="me-3"><use href="#drive"/></svg>Google Drive</div>
  <h2>Files not synced</h2>
  <p>3 items couldn't be synced and were moved to the “Lost<br>and Found” folder. To stop seeing this message, move the<br>files out of “Lost and Found”. If you disconnect<br>pt.kkpanwar@gmail.com, the files may be deleted.</p>
  <div class="d-flex"><button class="gbtn">Move all to Desktop</button><button class="gbtn text">Review files</button></div>
</div>

<script>
const XL="Microsoft Excel Worksheet",PD="Adobe Acrobat Document";
const list=[
["xls","Rekap BP SWB","03/01/2026 14:08",XL,"13 KB"],
["pdf","Pakta Integritas","30/10/2025 14:23",PD,"1.592 KB"],
["txt","Dokumen Teks Baru","13/10/2025 11:07","Text Document","1 KB"],
["pdf","SURAT PERNYATAAN","13/10/2025 10:53",PD,"217 KB"],
["pdf","CamScanner 13-10-2025 10.28","13/10/2025 10:53",PD,"1.165 KB"],
["pdf","CamScanner 13-10-2025 10.33","13/10/2025 10:53",PD,"739 KB"],
["pdf","CamScanner 13-10-2025 10.30","13/10/2025 10:53",PD,"889 KB"],
["xls","~$DATA KLIEN MBA SANTI","09/10/2024 10:39",XL,"1 KB"],
["","Rekap Aset OP","29/01/2026 18:14"],
["","Pak Anwar","29/01/2026 15:59"],
["","Garuda","29/01/2026 11:18"],
["","Daftar klien","28/01/2026 18:27"],
["","Bpjs TK dan Kes","27/01/2026 18:02"],
["","list klien","24/01/2026 10:09"],
["","PROPOSAL PERJANJIAN","22/12/2025 14:05"],
["","BPE","07/11/2025 11:12"],
["","NPWP","07/11/2025 11:06"],
["","ACIS","29/10/2025 13:49"],
["","Kerja santi","23/10/2025 14:53"],
["","PT STARWAY","09/10/2025 14:34"],
["","Others","09/10/2025 14:34"],
["","Realisasi deviden","09/10/2025 14:34"],
["","Enindo","08/10/2025 16:01"],
["","KKP ANWAR","28/08/2025 11:50"],
["","BUPOT","18/08/2025 15:23"],
["pfolder","Pembukuan","14/07/2025 16:40"],
["","WP NE","03/07/2025 18:21"],
["","SPT 2024 taahunan print","19/06/2025 17:39"],
["","SPT tahunan badan","17/06/2025 11:58"],
["","Sugeng","21/05/2025 9:08"],
["","Yayasan Dharma Nugraha","20/05/2025 9:48"],
["","SPT INDUK LAPOR","09/05/2025 15:24"],
["","Billing","06/05/2025 16:30"],
["","BupotPPh2023 rekap","29/04/2025 17:03"],
["","Form Perubahan Data OP","29/04/2025 10:14"],
["","GRUP TEKTANA","28/04/2025 19:22"],
["","victori","21/04/2025 18:08"],
["","Kingdom Jaya Abadi","18/04/2025 11:51"],
["","New folder (2)","16/04/2025 9:28"]];
document.getElementById("rows").insertAdjacentHTML("beforeend",list.map(([icon,name,date,type="File folder",size=""])=>
`<tr${name==="Kerja santi"?' class="hov"':''}><td><div class="d-flex align-items-center gap-1"><svg width="16" height="16"><use href="#${icon||"cfolder"}"/></svg>${name}</div></td><td>${date}</td><td>${type}</td><td>${size}</td></tr>`).join(""));
</script>
</body>
</html>
